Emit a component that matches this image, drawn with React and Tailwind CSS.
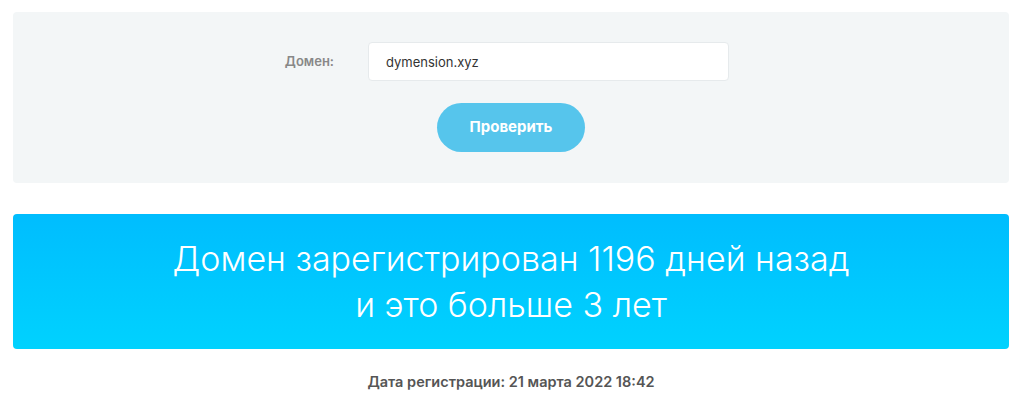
import React, { useState } from 'react';

const font = { fontFamily: 'Inter, "Noto Sans", sans-serif' };

const App = () => {
  const [domain, setDomain] = useState('dymension.xyz');

  return (
    <div className="min-h-screen bg-white pt-3 pl-[13px] pr-[3px]" style={font}>
      <div className="rounded bg-[#f3f6f7] pt-[30px] pb-[31px]">
        <div className="flex items-center">
          <label className="w-[355px] pr-[34px] text-right text-[13px] font-semibold text-[#888]">
            Домен:
          </label>
          <input
            type="text"
            value={domain}
            onChange={(e) => setDomain(e.target.value)}
            className="h-[39px] w-[361px] rounded-sm border border-[#e6eaec] bg-white px-[17px] text-[13px] text-[#333] outline-none"
          />
        </div>
        <div className="mt-[22px] flex justify-center">
          <button className="h-[49px] w-[148px] rounded-full bg-[#56c5ec] text-[15px] font-bold text-white">
            Проверить
          </button>
        </div>
      </div>

      <div className="mt-[31px] flex h-[135px] flex-col items-center justify-center rounded bg-gradient-to-b from-[#00bdfe] to-[#00d2fe] text-center text-[34px] font-light leading-[46px] text-white">
        <div>Домен зарегистрирован 1196 дней назад</div>
        <div>и это больше 3 лет</div>
      </div>

      <p className="mt-[22px] text-center text-[14.5px] font-semibold text-[#555]">
        Дата регистрации: 21 марта 2022 18:42
      </p>
    </div>
  );
};

export default App;
